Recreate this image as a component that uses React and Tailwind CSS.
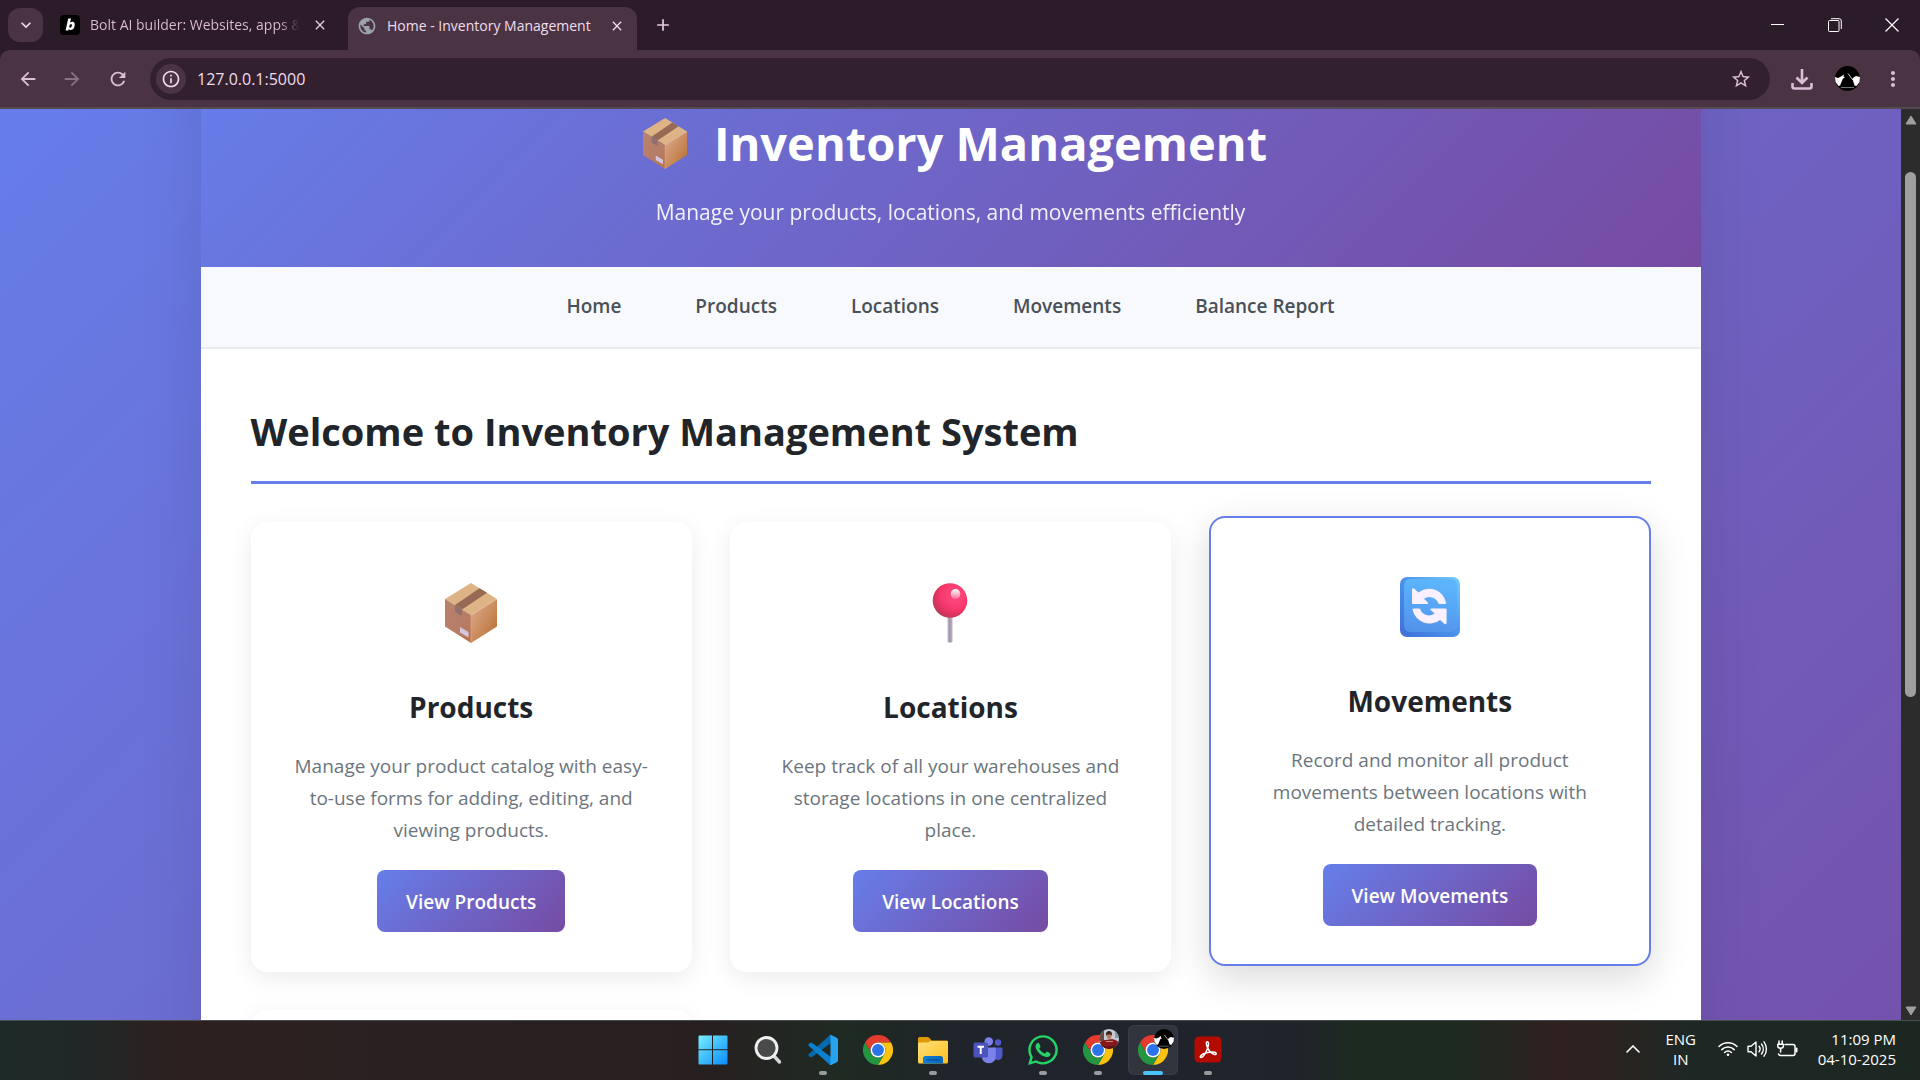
import { useId } from "react";
import {
  MdAdd,
  MdArrowBack,
  MdArrowForward,
  MdClose,
  MdExpandMore,
  MdInfoOutline,
  MdMoreVert,
  MdPublic,
  MdRefresh,
  MdStarBorder,
} from "react-icons/md";
import { FaWhatsapp } from "react-icons/fa";

/* ---------- Emoji-style pictures ---------- */

function BoxIcon({ className }) {
  const id = useId();
  return (
    <svg viewBox="0 0 52 60" className={className} aria-hidden="true">
      <defs>
        <linearGradient id={id + "l"} x1="0" y1="0" x2="0.8" y2="1">
          <stop offset="0" stopColor="#b9836f" />
          <stop offset="0.7" stopColor="#b67c66" />
          <stop offset="1" stopColor="#b8764e" />
        </linearGradient>
        <linearGradient id={id + "r"} x1="0" y1="0" x2="1" y2="1">
          <stop offset="0.1" stopColor="#dba787" />
          <stop offset="0.55" stopColor="#c98a5c" />
          <stop offset="0.9" stopColor="#b97130" />
        </linearGradient>
      </defs>
      <path d="M26 0 52 16 26 32 0 16Z" fill="#deb386" />
      <path d="M0 16 26 32V60L0 43.500Z" fill={`url(#${id}l)`} />
      <path d="M52 16 26 32V60L52 43.500Z" fill={`url(#${id}r)`} />
      <path d="M34.500 5.200 42 9.800 17 26.500 10 22Z" fill="#976a56" />
      <path d="M10 22 17 26.500V33L10 28.800Z" fill="#906f70" />
      <path d="M15 44 23.500 49V54.500L15 49.500Z" fill="#d5c4df" />
      <path d="M26 32V60" stroke="#e0b089" strokeWidth="0.600" />
      <path d="M26 32 52 16" stroke="#ecc8a2" strokeWidth="0.600" />
    </svg>
  );
}

function PinIcon({ className }) {
  const id = useId();
  return (
    <svg viewBox="0 0 36 60" className={className} aria-hidden="true">
      <defs>
        <radialGradient id={id + "b"} cx="0.65" cy="0.35" r="0.75">
          <stop offset="0" stopColor="#ff4d83" />
          <stop offset="0.55" stopColor="#f7386c" />
          <stop offset="0.8" stopColor="#d9325f" />
          <stop offset="1" stopColor="#a54550" />
        </radialGradient>
        <linearGradient id={id + "s"}>
          <stop offset="0" stopColor="#c6b9cf" />
          <stop offset="0.4" stopColor="#a597a9" />
          <stop offset="1" stopColor="#bfb0c6" />
        </linearGradient>
        <linearGradient id={id + "h"} x1="0" y1="0" x2="0" y2="1">
          <stop offset="0" stopColor="#ffffff" />
          <stop offset="1" stopColor="#ff6d98" />
        </linearGradient>
      </defs>
      <path d="M15.500 33H20.500V58.500Q18 61 15.500 58.500Z" fill={`url(#${id}s)`} />
      <circle cx="18" cy="17.500" r="17.300" fill={`url(#${id}b)`} />
      <ellipse cx="23.500" cy="11" rx="4.800" ry="5" fill={`url(#${id}h)`} />
    </svg>
  );
}

function CycleIcon({ className }) {
  const id = useId();
  const arrow =
    "M14 11.500Q12 10.500 12 13V26Q12 27 13 27H27Q29 27 27.800 25.500L24 21.800A9.300 9.300 0 0 1 38.200 26Q38.500 27 39.500 27H45Q46.300 27 46 25.600A17.200 17.200 0 0 0 18.500 15.500Z";
  return (
    <svg viewBox="0 0 60 60" className={className} aria-hidden="true">
      <defs>
        <linearGradient id={id + "f"} x1="0.2" y1="0" x2="0" y2="1">
          <stop offset="0" stopColor="#5db4fc" />
          <stop offset="0.5" stopColor="#56a3f4" />
          <stop offset="1" stopColor="#5290e8" />
        </linearGradient>
        <linearGradient id={id + "e"} x1="1" y1="0" x2="0" y2="1">
          <stop offset="0" stopColor="#76ccff" />
          <stop offset="0.5" stopColor="#4b92ea" />
          <stop offset="1" stopColor="#3e6fd8" />
        </linearGradient>
      </defs>
      <rect width="60" height="60" rx="7" fill={`url(#${id}e)`} />
      <rect x="4" y="2" width="53" height="53" rx="6" fill={`url(#${id}f)`} />
      <path d={arrow} fill="#fbf0ff" />
      <path d={arrow} fill="#fbf0ff" transform="rotate(180 29.300 29.200)" />
    </svg>
  );
}

/* ---------- Small app icons ---------- */

function BoltIcon() {
  return (
    <svg viewBox="0 0 20 20" className="size-5 shrink-0" aria-hidden="true">
      <rect width="20" height="20" rx="4" fill="#000" />
      <path
        d="M8.200 3.500H11L10.100 7.600Q11.200 6.600 12.500 6.700 15 7 14.700 10.200 14.200 14.600 10.900 15 9.500 15.100 8.700 14L8.400 15.500H5.600ZM9.200 11.400Q9.300 12.800 10.400 12.700 11.800 12.400 11.900 10.200 11.900 9 11 9 9.500 9.200 9.200 11.400Z"
        fill="#fff"
        fillRule="evenodd"
      />
    </svg>
  );
}

function AvatarIcon({ className }) {
  return (
    <svg viewBox="0 0 25 25" className={className} aria-hidden="true">
      <circle cx="12.500" cy="12.500" r="12.500" fill="#000" />
      <path
        d="M0 11 3 12 6 10.500 9 8.500 8.500 10.500 10 11.500 8 12.500 5 19.500 3.500 20 0.600 16ZM25 11 21 10 18.500 11.500 17.500 13 19.500 19.500 21.500 20 24.500 16Z"
        fill="#fff"
      />
      <path d="M13 7.500 16 11.500 18 14" stroke="#fff" strokeWidth="0.800" fill="none" />
      <path d="M6 21.500H19" stroke="#9aa" strokeWidth="0.700" />
    </svg>
  );
}

function PortraitIcon({ className }) {
  const id = useId();
  return (
    <svg viewBox="0 0 20 20" className={className} aria-hidden="true">
      <clipPath id={id}>
        <circle cx="10" cy="10" r="10" />
      </clipPath>
      <g clipPath={`url(#${id})`}>
        <rect width="20" height="20" fill="#c4cbd3" />
        <rect width="5" height="12" fill="#6a4a44" />
        <rect x="16" width="4" height="9" fill="#8f97a0" />
        <path d="M0 20V13.500Q4 10.500 7 11L13 10Q19 11.500 20 14V20Z" fill="#86191d" />
        <path d="M0 20V16Q10 19 20 15.500V20Z" fill="#5a1216" />
        <path d="M7 5.500Q7 2 10 2T13 5.500V6.500H7Z" fill="#3a211b" />
        <path d="M8 5.500H12.300V8.500Q10 11.500 8 8.500Z" fill="#b77b5b" />
        <path d="M7 12.500H14" stroke="#c48a6b" strokeWidth="1.200" />
      </g>
    </svg>
  );
}

function StartIcon() {
  const id = useId();
  return (
    <svg viewBox="0 0 30 30" className="size-[30px]" aria-hidden="true">
      <linearGradient id={id} gradientUnits="userSpaceOnUse" x1="0" y1="0" x2="30" y2="30">
        <stop offset="0" stopColor="#7df0ff" />
        <stop offset="0.5" stopColor="#3dbdfb" />
        <stop offset="1" stopColor="#0a8cff" />
      </linearGradient>
      <path
        d="M1.500 0.500H14V14.200H0.500V1.500Q0.500 0.500 1.500 0.500ZM15 0.500H28.500Q29.500 0.500 29.500 1.500V14.200H15ZM0.500 15.300H14V29.500H1.500Q0.500 29.500 0.500 28.500ZM15 15.300H29.500V28.500Q29.500 29.500 28.500 29.500H15Z"
        fill={`url(#${id})`}
      />
    </svg>
  );
}

function SearchIcon() {
  return (
    <svg viewBox="0 0 30 30" className="size-[30px]" aria-hidden="true">
      <path d="M20 20 26.500 27" stroke="#d6d8da" strokeWidth="3.400" strokeLinecap="round" />
      <circle cx="13.500" cy="13" r="10.500" fill="#4b4a4a" stroke="#eef0f2" strokeWidth="2.800" />
    </svg>
  );
}

function VsCodeIcon() {
  return (
    <svg viewBox="0 0 100 100" className="size-[30px]" aria-hidden="true">
      <path d="M96 10 76 1Q72 0 70 3L2 64Q0 67 2 69L8 74Q10 75 13 74L93 14Z" fill="#0569ad" />
      <path d="M96 90 76 99Q72 100 70 97L2 36Q0 33 2 31L8 26Q10 25 13 26L93 86Z" fill="#0a80cf" />
      <path
        d="M70 98Q75 102 79 99L97 90Q100 88 100 85V15Q100 12 97 10L79 1Q74 -1 70 2 75 0 75 6V94Q75 100 70 98Z"
        fill="#27a2ee"
      />
    </svg>
  );
}

function ChromeIcon() {
  return (
    <svg viewBox="0 0 48 48" className="size-[30px]" aria-hidden="true">
      <path d="M3.200 12A24 24 0 0 1 44.800 12H24A12 12 0 0 0 13.600 30Z" fill="#e33b2e" />
      <path d="M44.800 12A24 24 0 0 1 24 48L34.400 30A12 12 0 0 0 24 12Z" fill="#fcc210" />
      <path d="M24 48A24 24 0 0 1 3.200 12L13.600 30A12 12 0 0 0 34.400 30Z" fill="#249541" />
      <circle cx="24" cy="24" r="12" fill="#fff" />
      <circle cx="24" cy="24" r="9.500" fill="#2b74ea" />
    </svg>
  );
}

function ExplorerIcon() {
  const id = useId();
  return (
    <svg viewBox="0 0 30 30" className="size-[30px]" aria-hidden="true">
      <defs>
        <linearGradient id={id + "y"} x1="0" y1="0" x2="1" y2="1">
          <stop offset="0" stopColor="#ffe07c" />
          <stop offset="1" stopColor="#fdbf1e" />
        </linearGradient>
        <linearGradient id={id + "b"} x1="0" y1="0" x2="1" y2="0">
          <stop offset="0" stopColor="#0f80d6" />
          <stop offset="1" stopColor="#0a66b8" />
        </linearGradient>
      </defs>
      <path d="M0 3.500Q0 2 1.500 2H9.500Q11 2 12 3.500L13.500 5.500H28.500Q30 5.500 30 7V12H0Z" fill="#dd9a06" />
      <path d="M0 8.500Q0 7.500 1 7.500H9Q10.500 7.500 11.500 6.500L12 6H29Q30 6 30 7V27Q30 28.500 28.500 28.500H1.500Q0 28.500 0 27Z" fill={`url(#${id}y)`} />
      <path d="M5 28.500V23.500Q5 21 7.500 21H22.500Q25 21 25 23.500V28.500Z" fill={`url(#${id}b)`} />
      <path d="M9 24.800H21" stroke="#064e96" strokeWidth="1.200" strokeLinecap="round" />
    </svg>
  );
}

function TeamsIcon() {
  return (
    <svg viewBox="0 0 30 30" className="size-[30px]" aria-hidden="true">
      <circle cx="25" cy="7.500" r="3.200" fill="#5059c9" />
      <path d="M20 12.500H28.500Q29.500 12.500 29.500 13.500V20Q29.500 25 24.500 25 22 25 20 23Z" fill="#5059c9" />
      <circle cx="15.800" cy="6.500" r="4.300" fill="#7b83eb" />
      <path d="M9 12.500H21.500Q22.800 12.500 22.800 13.800V21Q22.800 28 15.800 28.300 9 28 8.600 21Z" fill="#7b83eb" />
      <rect x="0.500" y="7.500" width="14.500" height="15" rx="1.500" fill="#4b53bc" />
      <path d="M4.500 11.700H11M7.750 11.700V19" stroke="#fff" strokeWidth="1.900" />
    </svg>
  );
}

function AcrobatIcon() {
  return (
    <svg viewBox="0 0 30 30" className="size-[30px]" aria-hidden="true">
      <rect x="1.500" y="1.500" width="27" height="26" rx="4.500" fill="#b30b00" />
      <path
        d="M14.500 6.800C12.800 6.600 13 9.500 14.800 13.200 16.200 16.200 18.500 18.500 21 19.300 23.500 20 24.300 18 21.500 17.300 18 16.500 13.500 17.500 10.500 18.800 7.500 20.200 6.500 22.200 7.800 22.500 9.800 22.600 12.500 18.500 14.300 14 15.800 10.200 16 7 14.500 6.800Z"
        fill="none"
        stroke="#fff"
        strokeWidth="1.500"
        strokeLinejoin="round"
      />
    </svg>
  );
}

/* ---------- Browser chrome ---------- */

function TabStrip() {
  return (
    <div className="flex h-[50px] shrink-0 items-center bg-[#2c1b29] pl-2">
      <button
        aria-label="Search tabs"
        className="flex h-[34px] w-[35px] items-center justify-center rounded-xl bg-[#4a3443] text-[#f0dcec]"
      >
        <MdExpandMore className="size-5" />
      </button>

      <div className="ml-[17px] flex w-[274px] items-center">
        <BoltIcon />
        <span className="ml-[10px] w-[210px] overflow-hidden whitespace-nowrap bg-gradient-to-r from-[#dcbfd6] from-90% to-transparent bg-clip-text text-sm text-transparent">
          Bolt AI builder: Websites, apps &amp;
        </span>
        <button aria-label="Close Bolt tab" className="ml-3 text-[#e6cfe0]">
          <MdClose className="size-4" />
        </button>
      </div>

      <div className="ml-[14px] flex h-[43px] w-[289px] items-center self-end rounded-t-xl bg-[#4a3443] pb-[6px] pl-[9px] text-[#f0dcec]">
        <MdPublic className="size-5 shrink-0 text-[#9aa3ab]" />
        <span className="ml-[10px] w-[212px] whitespace-nowrap text-sm">Home - Inventory Management</span>
        <button aria-label="Close Home tab" className="ml-[10px]">
          <MdClose className="size-4" />
        </button>
      </div>

      <button aria-label="New tab" className="ml-4 text-[#e6cfe0]">
        <MdAdd className="size-5" />
      </button>

      <div className="ml-auto flex h-full text-white">
        <button aria-label="Minimize" className="flex w-[57px] items-center justify-center">
          <svg viewBox="0 0 14 14" className="size-[14px]">
            <path d="M0 6.500H13" stroke="currentColor" />
          </svg>
        </button>
        <button aria-label="Restore" className="flex w-[57px] items-center justify-center">
          <svg viewBox="0 0 14 14" className="size-[14px]" fill="none" stroke="currentColor">
            <rect x="0.500" y="2.500" width="10.500" height="11" rx="1" />
            <path d="M3 0.700H11Q13.300 0.700 13.300 3V11" />
          </svg>
        </button>
        <button aria-label="Close window" className="flex w-[57px] items-center justify-center">
          <svg viewBox="0 0 14 14" className="size-[14px]">
            <path d="M0.500 0.500 13.500 13.500M13.500 0.500 0.500 13.500" stroke="currentColor" strokeWidth="1.200" />
          </svg>
        </button>
      </div>
    </div>
  );
}

function Toolbar() {
  return (
    <div className="shrink-0 bg-[#2c1b29]">
      <div className="flex h-[59px] items-center rounded-t-[10px] border-b-2 border-[#544a52] bg-[#4a3443] pl-[17px] text-[#dcbfd6]">
        <button aria-label="Back">
          <MdArrowBack className="size-[22px]" />
        </button>
        <button aria-label="Forward" className="ml-[22px] text-[#8a7182]">
          <MdArrowForward className="size-[22px]" />
        </button>
        <button aria-label="Reload" className="ml-6">
          <MdRefresh className="size-[22px]" />
        </button>

        <div className="ml-[21px] flex h-[42px] flex-1 items-center rounded-full bg-[#33202f] pl-[6px] pr-[18px]">
          <button
            aria-label="Site information"
            className="flex size-[30px] shrink-0 items-center justify-center rounded-full bg-[#4a3443] text-[#f0dcec]"
          >
            <MdInfoOutline className="size-5" />
          </button>
          <input
            aria-label="Address"
            defaultValue="127.0.0.1:5000"
            className="ml-[11px] min-w-0 flex-1 bg-transparent text-base text-[#f0dcec] outline-none"
          />
          <button aria-label="Bookmark this page">
            <MdStarBorder className="size-[22px]" />
          </button>
        </div>

        <button aria-label="Downloads" className="ml-[21px]">
          <svg viewBox="0 0 22 22" className="size-[22px]" fill="none" stroke="currentColor" strokeWidth="2.600">
            <path d="M11 1V14.500M5.500 9.500 11 15 16.500 9.500M1.500 15V18.500Q1.500 20.500 3.500 20.500H18.500Q20.500 20.500 20.500 18.500V15" />
          </svg>
        </button>
        <button aria-label="Profile" className="ml-[22px]">
          <AvatarIcon className="size-[25px]" />
        </button>
        <button aria-label="Menu" className="ml-[21px] mr-[15px]">
          <MdMoreVert className="size-6" />
        </button>
      </div>
    </div>
  );
}

function Scrollbar() {
  return (
    <div className="flex w-[19px] shrink-0 flex-col items-center bg-[#2c2c2c] pb-1 pt-[6px]" aria-hidden="true">
      <svg viewBox="0 0 12 10" className="h-[10px] w-3">
        <path d="M6 1 11 9H1Z" fill="#9f9f9f" stroke="#9f9f9f" strokeLinejoin="round" />
      </svg>
      <div className="flex w-full flex-1 flex-col items-center pt-[47px]">
        <div className="h-[63%] w-[11px] rounded-full bg-[#9f9f9f]" />
      </div>
      <svg viewBox="0 0 12 10" className="h-[10px] w-3">
        <path d="M6 9 11 1H1Z" fill="#9f9f9f" stroke="#9f9f9f" strokeLinejoin="round" />
      </svg>
    </div>
  );
}

/* ---------- Web page ---------- */

const NAV = ["Home", "Products", "Locations", "Movements", "Balance Report"];

const CARDS = [
  {
    title: "Products",
    Icon: BoxIcon,
    text: "Manage your product catalog with easy-to-use forms for adding, editing, and viewing products.",
    action: "View Products",
  },
  {
    title: "Locations",
    Icon: PinIcon,
    text: "Keep track of all your warehouses and storage locations in one centralized place.",
    action: "View Locations",
  },
  {
    title: "Movements",
    Icon: CycleIcon,
    text: "Record and monitor all product movements between locations with detailed tracking.",
    action: "View Movements",
    hovered: true,
  },
];

function Card({ title, Icon, text, action, hovered }) {
  return (
    <section
      className={
        "flex flex-col items-center rounded-2xl border-2 bg-white px-[38px] pb-[38px] pt-[59px] text-center " +
        (hovered
          ? "-translate-y-1.5 border-[#667eea] shadow-[0_12px_38px_rgba(0,0,0,0.15)]"
          : "border-transparent shadow-[0_6px_25px_rgba(0,0,0,0.08)]")
      }
    >
      <Icon className="h-[60px]" />
      <h3 className="mt-[42px] text-[28px] font-bold leading-[44px] text-[#212529]">{title}</h3>
      <p className="mt-[21px] text-[19px] leading-8 text-[#6c757d]">{text}</p>
      <a
        href="#"
        className="mt-6 rounded-lg bg-[linear-gradient(135deg,#667eea,#764ba2)] px-[29px] pb-[14px] pt-4 text-[19px] font-semibold leading-8 text-white"
      >
        {action}
      </a>
    </section>
  );
}

function InventoryPage() {
  return (
    <div className="min-w-0 flex-1 overflow-hidden">
      <div className="-mt-[60px] bg-[linear-gradient(135deg,#667eea,#764ba2)]">
        <div className="mx-auto max-w-[1500px] bg-white shadow-[0_0_62px_rgba(0,0,0,0.1)]">
          <header className="bg-[linear-gradient(135deg,#667eea,#764ba2)] pb-[38px] pt-[54px] text-center text-white">
            <h1 className="flex items-center justify-center gap-[18px] text-[47px] font-bold leading-[80px]">
              <span className="flex w-[62px] justify-center">
                <BoxIcon className="h-[51px]" />
              </span>
              Inventory Management
            </h1>
            <p className="mt-3 text-[21px] leading-[34px] opacity-90">
              Manage your products, locations, and movements efficiently
            </p>
          </header>

          <nav className="flex h-[82px] items-center justify-center gap-[74px] border-b-2 border-[#e9ecef] bg-[#f8f9fc] pb-[2px] text-[19px] font-semibold text-[#495057]">
            {NAV.map((item) => (
              <a key={item} href="#">
                {item}
              </a>
            ))}
          </nav>

          <main className="px-[50px] pb-[50px] pt-12">
            <h2 className="mb-[38px] border-b-[3px] border-[#667eea] pb-4 text-[38px] font-bold leading-[68px] text-[#212529]">
              Welcome to Inventory Management System
            </h2>
            <div className="grid grid-cols-3 gap-[38px]">
              {CARDS.map((card) => (
                <Card key={card.title} {...card} />
              ))}
              <section className="h-[450px] rounded-2xl bg-white shadow-[0_6px_25px_rgba(0,0,0,0.08)]" />
            </div>
          </main>
        </div>
      </div>
    </div>
  );
}

/* ---------- Taskbar ---------- */

const APPS = [
  { name: "Start", Icon: StartIcon },
  { name: "Search", Icon: SearchIcon },
  { name: "Visual Studio Code", Icon: VsCodeIcon, running: true },
  { name: "Chrome", Icon: ChromeIcon },
  { name: "File Explorer", Icon: ExplorerIcon, running: true },
  { name: "Teams", Icon: TeamsIcon },
  { name: "WhatsApp", Icon: () => <FaWhatsapp className="size-[34px] text-[#25d366]" />, running: true },
  { name: "Chrome, first profile", Icon: ChromeIcon, Badge: PortraitIcon, running: true },
  { name: "Chrome, second profile", Icon: ChromeIcon, Badge: AvatarIcon, active: true },
  { name: "Acrobat", Icon: AcrobatIcon, running: true },
];

function Taskbar() {
  return (
    <footer className="grid h-[60px] shrink-0 grid-cols-[1fr_auto_1fr] items-center border-t border-[#4a4d50] bg-[linear-gradient(90deg,#1e2a29_0%,#1f2827_4%,#2d2020_9%,#2b2021_20%,#271f20_36%,#1f2a22_44%,#1f242a_50%,#20232c_62%,#1f2429_68%,#1c2b1f_71%,#1c2a1f_76%,#302020_81%,#2b2320_84%,#1d2825_88%,#1c2722_100%)] pb-[2px] text-white">
      <div />
      <div className="flex gap-[5px]">
        {APPS.map(({ name, Icon, Badge, running, active }) => (
          <button
            key={name}
            aria-label={name}
            className={
              "relative flex size-[50px] items-center justify-center rounded-md " +
              (active ? "bg-white/8 ring-1 ring-inset ring-white/5" : "")
            }
          >
            <Icon />
            {Badge && <Badge className="absolute right-1 top-1 size-5" />}
            {running && <span className="absolute bottom-0 h-1 w-2 rounded-full bg-[#9a9b9d]" />}
            {active && <span className="absolute bottom-0 h-1 w-5 rounded-full bg-[#4cc2ff]" />}
          </button>
        ))}
      </div>

      <div className="flex items-center justify-end pb-[2px] pr-6 text-[15px] leading-5">
        <button aria-label="Show hidden icons">
          <svg viewBox="0 0 14 8" className="h-2 w-[14px]">
            <path d="M1 7 7 1 13 7" fill="none" stroke="currentColor" strokeWidth="1.600" strokeLinecap="round" />
          </svg>
        </button>
        <div className="ml-[25px] w-8 text-center">
          <div>ENG</div>
          <div>IN</div>
        </div>
        <button aria-label="Network, volume and battery" className="ml-[21px] flex items-center gap-[9px]">
          <svg viewBox="0 0 20 16" className="h-4 w-5" fill="none" stroke="currentColor" strokeWidth="1.500" strokeLinecap="round">
            <path d="M1 5.500A12.800 12.800 0 0 1 19 5.500M3.800 8.600A8.800 8.800 0 0 1 16.200 8.600M6.600 11.500A4.800 4.800 0 0 1 13.400 11.500" />
            <circle cx="10" cy="13.800" r="1.300" fill="currentColor" stroke="none" />
          </svg>
          <svg viewBox="0 0 21 18" className="h-[18px] w-[21px]" fill="none" stroke="currentColor" strokeWidth="1.400" strokeLinecap="round" strokeLinejoin="round">
            <path d="M1 6.200H4L9 2V16L4 11.800H1Z" />
            <path d="M12 6.300A4.200 4.200 0 0 1 12 11.700M14.500 4A8 8 0 0 1 14.500 14M17 1.800A12 12 0 0 1 17 16.200" />
          </svg>
          <svg viewBox="0 0 21 18" className="h-[18px] w-[21px]" fill="none" stroke="currentColor" strokeWidth="1.500" strokeLinecap="round" strokeLinejoin="round">
            <path d="M8 4.500H16Q18 4.500 18 6.500V13.500Q18 15.500 16 15.500H4Q2 15.500 1.500 14" />
            <path d="M19.500 8.500V11.500" strokeWidth="2" />
            <path d="M2 1V4M5.200 1V4M0.800 4.200H6.400V6Q6.400 8.200 3.600 8.200 0.800 8.200 0.800 6ZM3.600 8.500V12" />
          </svg>
        </button>
        <div className="ml-5 text-right">
          <div>11:09 PM</div>
          <div>04-10-2025</div>
        </div>
      </div>
    </footer>
  );
}

export default function App() {
  return (
    <div className="flex h-screen flex-col overflow-hidden font-['Open_Sans','Noto_Sans',sans-serif]">
      <TabStrip />
      <Toolbar />
      <div className="flex min-h-0 flex-1">
        <InventoryPage />
        <Scrollbar />
      </div>
      <Taskbar />
    </div>
  );
}
